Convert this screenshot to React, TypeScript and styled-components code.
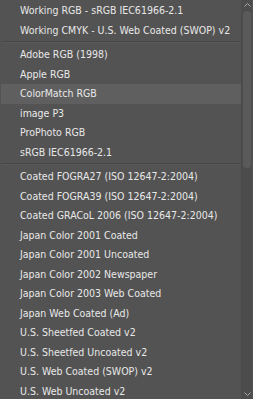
import React from 'react';
import styled, { createGlobalStyle } from 'styled-components';

const GlobalStyle = createGlobalStyle`
  html, body {
    margin: 0;
    padding: 0;
    background: #535353;
  }
`;

const Popup = styled.div`
  width: 253px;
  height: 399px;
  display: flex;
  background: #535353;
  overflow: hidden;
  font-family: "DejaVu Sans Condensed", "DejaVu Sans", sans-serif;
  font-size: 10.5px;
  color: #e8e8e8;
`;

const List = styled.ul`
  flex: 1;
  margin: 0;
  padding: 1px 0 0 1px;
  list-style: none;
`;

const Item = styled.li<{ $active?: boolean }>`
  height: 19.5px;
  line-height: 19.5px;
  padding-left: 19px;
  white-space: nowrap;
  background: ${({ $active }) => ($active ? '#5f5f5f' : 'transparent')};
`;

const Separator = styled.li`
  height: 1px;
  margin: 1px 0 2px 1px;
  background: #464646;
  border-bottom: 1px solid #595959;
  box-sizing: content-box;
`;

const Scrollbar = styled.div`
  width: 10px;
  margin-right: 1px;
  display: flex;
  flex-direction: column;
  align-items: center;
  background: #4c4c4c;
  border-left: 1px solid #4a4a4a;
`;

const Arrow = styled.div`
  height: 10px;
  display: flex;
  align-items: center;
  justify-content: center;
  color: #a8a8a8;
`;

const Track = styled.div`
  flex: 1;
  width: 100%;
  display: flex;
  flex-direction: column;
`;

const Thumb = styled.div`
  height: 157px;
  margin: 1px 1px 0;
  border-radius: 4px;
  background: #5a5a5a;
`;

const Chevron = ({ up }: { up?: boolean }) => (
  <svg width="7" height="4" viewBox="0 0 7 4">
    <path
      d={up ? 'M0.5 3.5 L3.5 0.5 L6.5 3.5' : 'M0.5 0.5 L3.5 3.5 L6.5 0.5'}
      fill="none"
      stroke="currentColor"
      strokeWidth="1"
    />
  </svg>
);

const groups: string[][] = [
  ['Working RGB - sRGB IEC61966-2.1', 'Working CMYK - U.S. Web Coated (SWOP) v2'],
  ['Adobe RGB (1998)', 'Apple RGB', 'ColorMatch RGB', 'image P3', 'ProPhoto RGB', 'sRGB IEC61966-2.1'],
  [
    'Coated FOGRA27 (ISO 12647-2:2004)',
    'Coated FOGRA39 (ISO 12647-2:2004)',
    'Coated GRACoL 2006 (ISO 12647-2:2004)',
    'Japan Color 2001 Coated',
    'Japan Color 2001 Uncoated',
    'Japan Color 2002 Newspaper',
    'Japan Color 2003 Web Coated',
    'Japan Web Coated (Ad)',
    'U.S. Sheetfed Coated v2',
    'U.S. Sheetfed Uncoated v2',
    'U.S. Web Coated (SWOP) v2',
    'U.S. Web Uncoated v2',
  ],
];

export default function App() {
  return (
    <>
      <GlobalStyle />
      <Popup>
        <List>
          {groups.map((group, gi) => (
            <React.Fragment key={gi}>
              {gi > 0 && <Separator />}
              {group.map((name) => (
                <Item key={name} $active={name === 'ColorMatch RGB'}>
                  {name}
                </Item>
              ))}
            </React.Fragment>
          ))}
        </List>
        <Scrollbar>
          <Arrow>
            <Chevron up />
          </Arrow>
          <Track>
            <Thumb />
          </Track>
          <Arrow>
            <Chevron />
          </Arrow>
        </Scrollbar>
      </Popup>
    </>
  );
}
